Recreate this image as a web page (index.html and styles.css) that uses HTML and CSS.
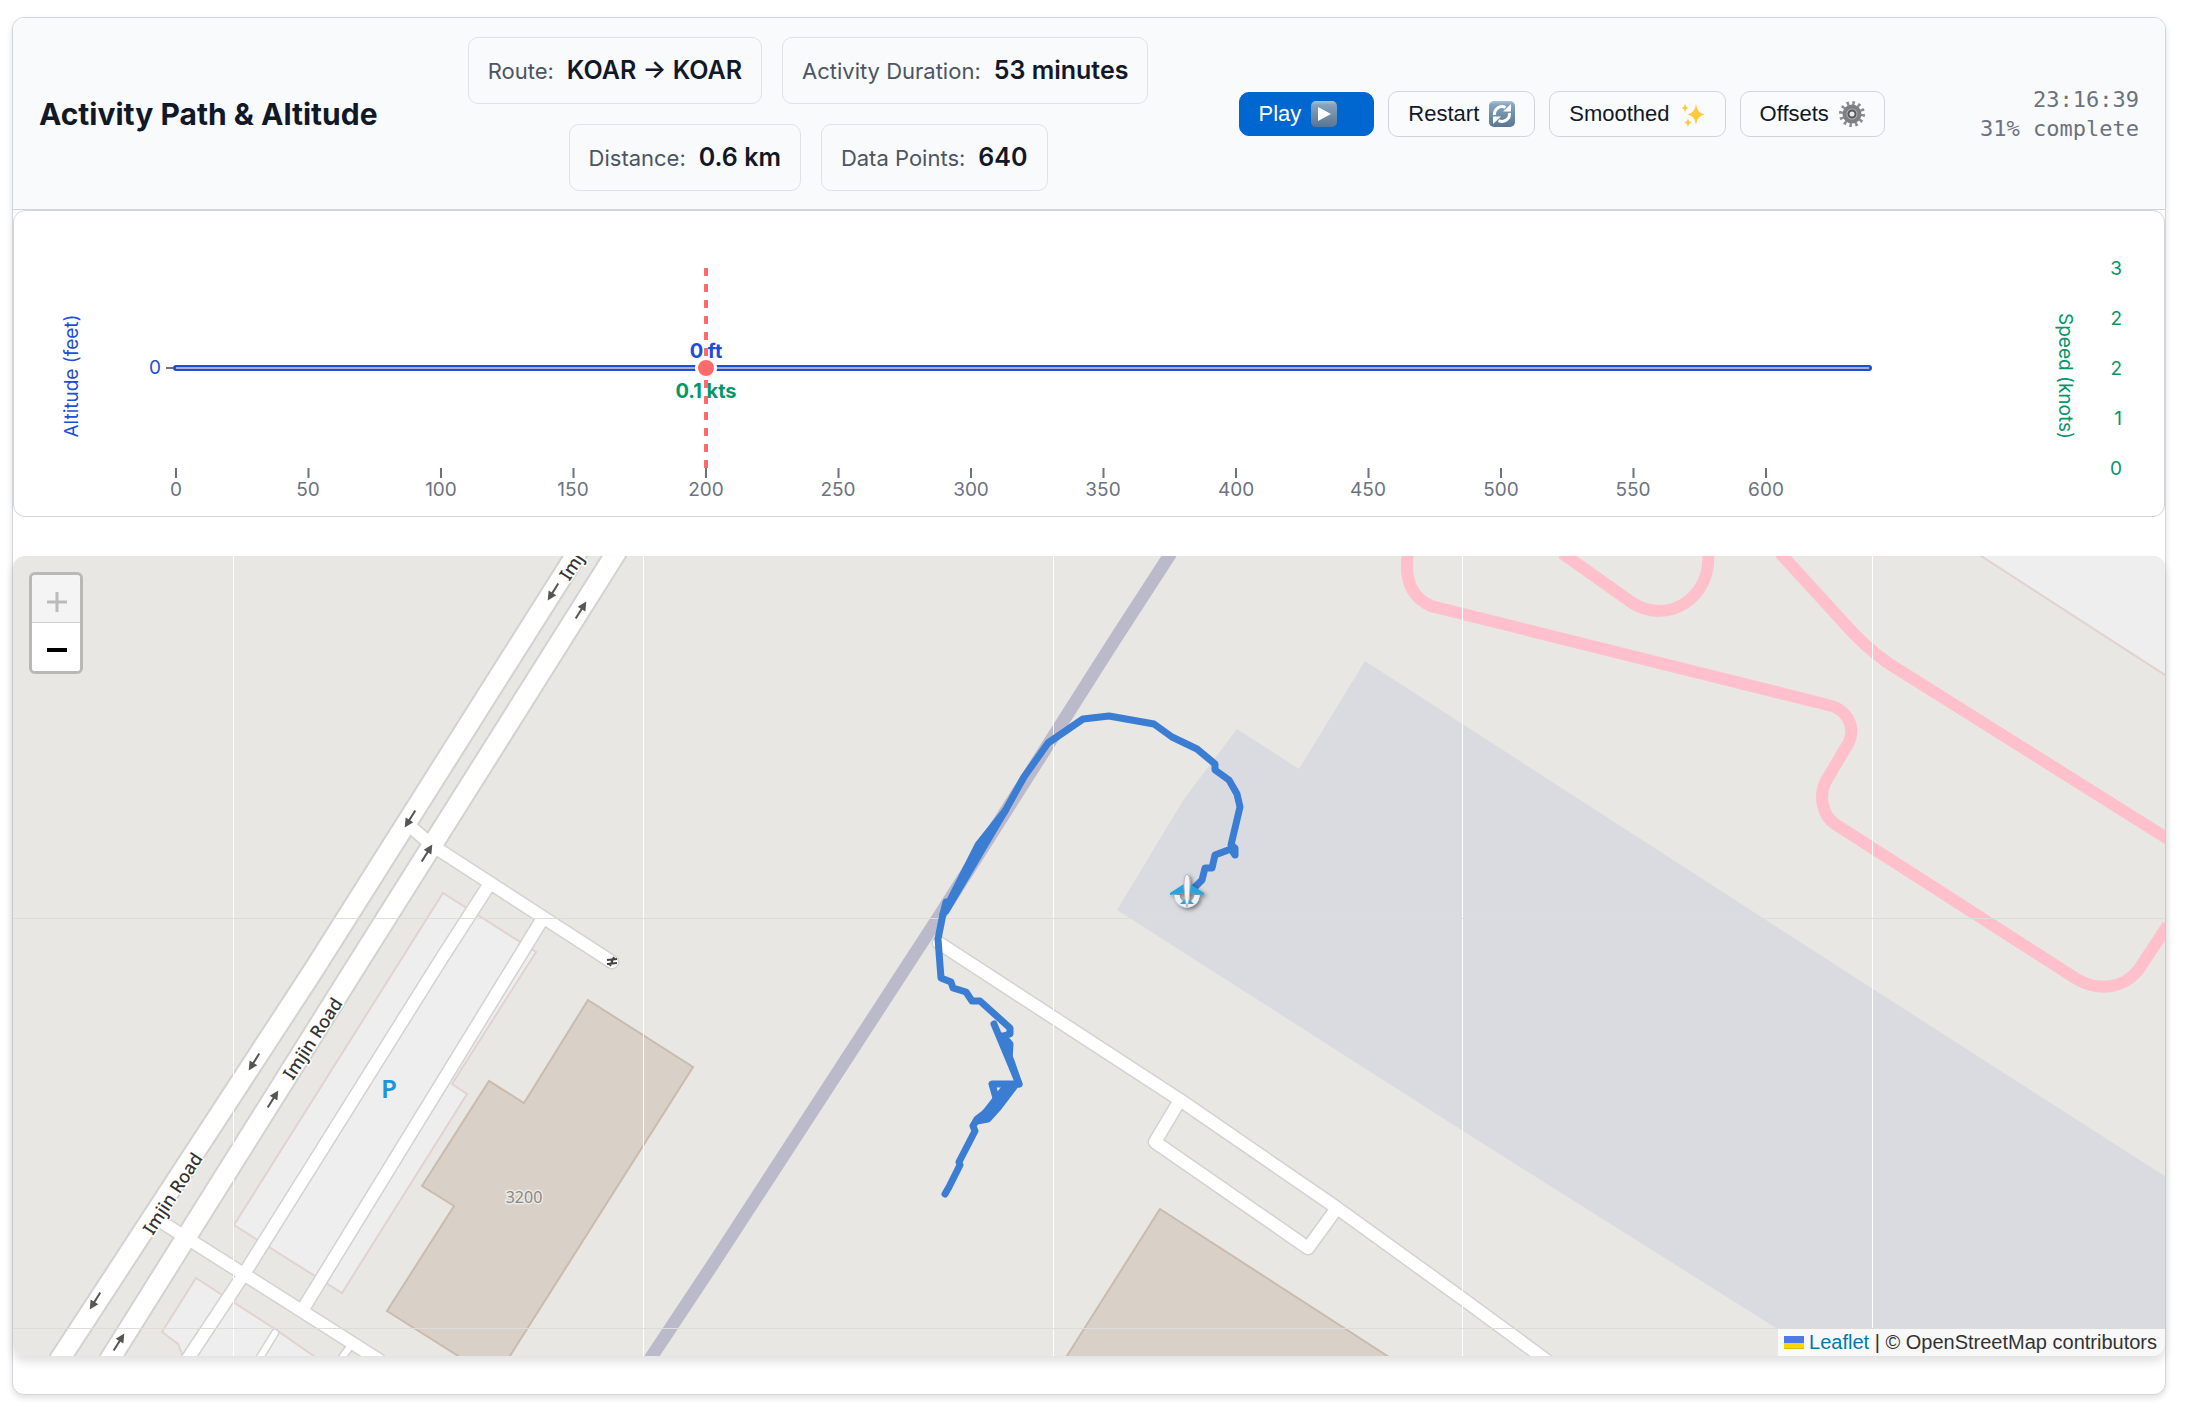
FILE: index.html
```html
<!DOCTYPE html>
<html lang="en">
<head>
<meta charset="utf-8">
<title>Activity Path &amp; Altitude</title>
<link rel="stylesheet" href="styles.css">
</head>
<body>
<main class="card">
  <header class="card-header">
    <h1 class="title">Activity Path &amp; Altitude</h1>
    <div class="stats">
      <div class="stats-row">
        <div class="stat"><span class="stat-label">Route:</span><span class="stat-value">KOAR → KOAR</span></div>
        <div class="stat"><span class="stat-label">Activity Duration:</span><span class="stat-value">53 minutes</span></div>
      </div>
      <div class="stats-row">
        <div class="stat"><span class="stat-label">Distance:</span><span class="stat-value">0.6 km</span></div>
        <div class="stat"><span class="stat-label">Data Points:</span><span class="stat-value">640</span></div>
      </div>
    </div>
    <div class="controls">
      <button type="button" class="btn btn-primary">Play
        <svg class="emoji" viewBox="0 0 26 26" aria-hidden="true">
          <defs><linearGradient id="key" x1="0" y1="0" x2="0" y2="1"><stop offset="0" stop-color="#a9c2d6"/><stop offset=".15" stop-color="#86a3bc"/><stop offset="1" stop-color="#587592"/></linearGradient></defs>
          <rect width="26" height="26" rx="5" fill="url(#key)"/><path d="M7 6v14l13-7z" fill="#fff"/>
        </svg>
      </button>
      <button type="button" class="btn">Restart
        <svg class="emoji" viewBox="0 0 26 26" aria-hidden="true">
          <rect width="26" height="26" rx="5" fill="url(#key)"/>
          <path d="M5.500 14A7.500 7.500 0 0 1 16.500 6.500M20.500 12A7.500 7.500 0 0 1 9.500 19.500" fill="none" stroke="#fff" stroke-width="3"/>
          <path d="M14 10.500h8V3zM12 15.500H4V23z" fill="#fff"/>
        </svg>
      </button>
      <button type="button" class="btn">Smoothed
        <svg class="emoji" viewBox="0 0 26 26" aria-hidden="true">
          <path d="M16 3q1 9 8.500 10.500Q17 15 16 24q-1-9-8.500-10.500Q15 12 16 3z" fill="#ffc83d"/>
          <path d="M5 2q.5 4.500 3.500 5Q5.500 7.500 5 12 4.500 7.500 1.500 7 4.500 6.500 5 2zM8 17q.6 4 4 4.500-3.400.5-4 4.500-.6-4-4-4.500 3.400-.5 4-4.500z" fill="#ffc83d"/>
        </svg>
      </button>
      <button type="button" class="btn">Offsets
        <svg class="emoji" viewBox="0 0 26 26" aria-hidden="true">
          <circle cx="13" cy="13" r="11" fill="none" stroke="#8b8d90" stroke-width="4" stroke-dasharray="2.500 3.260"/>
          <circle cx="13" cy="13" r="7.500" fill="#aeb0b4" stroke="#7d7f83" stroke-width="4"/>
          <circle cx="13" cy="13" r="3.500" fill="#e9eaec" stroke="#55575b" stroke-width="2"/>
        </svg>
      </button>
    </div>
    <div class="progress"><span>23:16:39</span><span>31% complete</span></div>
  </header>

  <section class="chart" aria-label="Altitude and speed">
    <svg class="chart-svg" viewBox="14 210 2150 305">
      <g class="ticks">
        <path d="M176 467v10M308.500 467v10M441 467v10M573.500 467v10M706 467v10M838.500 467v10M971 467v10M1103.500 467v10M1236 467v10M1368.500 467v10M1501 467v10M1633.500 467v10M1766 467v10M166 367h10"/>
      </g>
      <g class="x-labels">
        <text x="176" y="495">0</text><text x="308" y="495">50</text><text x="441" y="495">100</text><text x="573" y="495">150</text><text x="706" y="495">200</text><text x="838" y="495">250</text><text x="971" y="495">300</text><text x="1103" y="495">350</text><text x="1236" y="495">400</text><text x="1368" y="495">450</text><text x="1501" y="495">500</text><text x="1633" y="495">550</text><text x="1766" y="495">600</text>
      </g>
      <text class="alt end" x="161" y="373">0</text>
      <text class="alt mid" transform="translate(78 375) rotate(-90)">Altitude (feet)</text>
      <text class="spd mid" transform="translate(2059 375) rotate(90)">Speed (knots)</text>
      <g class="spd end">
        <text x="2122" y="274">3</text><text x="2122" y="324">2</text><text x="2122" y="374">2</text><text x="2122" y="424">1</text><text x="2122" y="474">0</text>
      </g>
      <path d="M176 367H1869" stroke="#1d4ed8" stroke-width="6" stroke-linecap="round"/>
      <path d="M176 367H1869" stroke="#a5aed0" stroke-width="2"/>
      <path d="M706 267V467" stroke="#ff6b6b" stroke-width="4" stroke-dasharray="8 8"/>
      <circle cx="706" cy="367" r="9.500" fill="#ff6b6b" stroke="#fff" stroke-width="3"/>
      <text class="alt mid strong" x="706" y="357">0 ft</text>
      <text class="spd mid strong" x="706" y="397">0.1 kts</text>
    </svg>
  </section>

  <section class="map" aria-label="Map">
    <svg class="map-svg" viewBox="13 555 2152 800" preserveAspectRatio="xMidYMid slice">
      <defs>
        <g id="arrow"><path d="M-10 0H4" stroke="#555" stroke-width="2"/><path d="M1-4.500L10 0 1 4.500z" fill="#555"/></g>
        <filter id="shadow" x="-50%" y="-50%" width="200%" height="200%"><feDropShadow dx="2" dy="2" stdDeviation="2" flood-opacity=".5"/></filter>
        <path id="service" d="M412 827L433 845 612 961M487 887L440 960 244 1273 187 1359M540 922L303 1308M160 1220L379 1359M939 942L1180 1099 1337 1207 1463 1298 1546 1359M1180 1099L1155 1141 1308 1247 1337 1207"/>
        <path id="lanes" d="M577 552L313 970 60 1358M616 552L353 970 110 1358"/>
        <path id="stubs" d="M275 1332L259 1358M349 1347L341 1358"/>
      </defs>
      <rect x="13" y="555" width="2152" height="800" fill="#e8e7e3"/>
      <g fill="#eee" stroke="#e2d2d0" stroke-width="2">
        <path d="M443 892L536 951 452 1083 467 1093 342 1292 234 1224z"/>
        <path d="M196 1277L275 1328 318 1358H184L178 1343 162 1331z"/>
        <path d="M1978 553L2168 676V550z"/>
      </g>
      <g fill="#d9d0c7" stroke="#cbbbae" stroke-width="2">
        <path d="M588 999L693 1066 508 1358H463L387 1310 454 1205 422 1185 489 1080 524 1102z"/>
        <path d="M1160 1208L1392 1358H1065z"/>
      </g>
      <path d="M1237 728L1299 768 1365 660 1873 988 2166 1176V1356H1822L1463 1130 1117 909 1184 798z" fill="#dadbe0"/>
      <path d="M1171 552L1114 640 938 917 715 1260 650 1358" fill="none" stroke="#bbbacb" stroke-width="13"/>
      <g fill="none" stroke-linejoin="round" stroke-linecap="round">
        <g stroke="#d3d2cf"><use href="#service" stroke-width="15"/><use href="#lanes" stroke-width="23"/><use href="#stubs" stroke-width="9"/></g>
        <g stroke="#fff"><use href="#service" stroke-width="12"/><use href="#lanes" stroke-width="19"/><use href="#stubs" stroke-width="6"/></g>
      </g>
      <g fill="none" stroke="#ffc0cb" stroke-width="12">
        <path d="M1408 552Q1402 592 1431 605L1828 704C1846 708 1856 724 1849 741L1826 780C1818 795 1823 815 1835 823L2075 977C2097 991 2124 988 2139 968L2168 924"/>
        <path d="M1562 552L1631 601C1666 625 1712 598 1708 552"/>
        <path d="M1780 552L1844 622Q1864 645 1888 662L2168 838"/>
      </g>
      <g class="tile-columns"><path d="M233.500 555V1355M643.500 555V1355M1053.500 555V1355M1462.500 555V1355M1872.500 555V1355"/></g>
      <g class="tile-rows"><path d="M13 917.500H2165M13 1327.500H2165"/></g>
      <use href="#arrow" transform="translate(553 591) rotate(122)"/>
      <use href="#arrow" transform="translate(410 818) rotate(122)"/>
      <use href="#arrow" transform="translate(254 1061) rotate(122)"/>
      <use href="#arrow" transform="translate(95 1300) rotate(122)"/>
      <use href="#arrow" transform="translate(581 609) rotate(-58)"/>
      <use href="#arrow" transform="translate(427 852) rotate(-58)"/>
      <use href="#arrow" transform="translate(273 1098) rotate(-58)"/>
      <use href="#arrow" transform="translate(119 1341) rotate(-58)"/>
      <path d="M607 959l10-1M607 963l10-1M614 956l-4 9" stroke="#444" stroke-width="2"/>
      <g class="road-name">
        <text transform="translate(178 1196) rotate(-57)">Imjin Road</text>
        <text transform="translate(318 1041) rotate(-57)">Imjin Road</text>
        <text transform="translate(577 569) rotate(-57)">Imj</text>
      </g>
      <text class="house-number" x="524" y="1202">3200</text>
      <text class="parking" x="389" y="1097">P</text>
      <g class="track">
        <path d="M945 1193L949 1186 960 1164 959 1161 975 1130 973 1125 977 1118 993 1106 996 1097 992 1083H1019L994 1023 1009 1059 1010 1043 1003 1035 1010 1033V1027L980 1000H972L966 991 953 987 951 981 941 977 938 938 943 913 978 844 1005 810 1024 776 1048 742 1083 718 1109 715 1154 723 1172 736 1197 748 1215 763V769L1229 779 1237 793 1240 806 1231 844 1235 847V854L1231 848 1215 854 1212 867 1205 867 1202 879 1194 887"/>
        <path d="M943 913L946 901M946 910L986 842 1005 810M948 905L984 840M1019 1083L1011 1060 1001 1035M1014 1086L998 1107 988 1118 977 1120M1010 1088L996 1098 990 1112M1004 1088L982 1116"/>
      </g>
      <g filter="url(#shadow)" transform="translate(1187 890)">
        <path d="M-10 4a10 10 0 0 0 20 0" fill="none" stroke="#e9f3f3" stroke-width="5"/>
        <path d="M-17 2L-3-7H3L17 2V4L3 2H-3L-17 4z" fill="#29a3dc"/>
        <path d="M-7 13L-2 8H2L7 13H-7z" fill="#29a3dc"/>
        <path d="M0-17C3-15 3-10 3-4L2 9 0 16-2 9-3-4C-3-10-3-15 0-17z" fill="#f4f4f4" stroke="#b4b6b8"/>
      </g>
    </svg>
    <div class="zoom-control">
      <button type="button" class="zoom-btn" disabled aria-label="Zoom in"><svg viewBox="0 0 20 20" class="zoom-icon"><path d="M0 10h20M10 0v20" stroke="currentColor" stroke-width="3"/></svg></button>
      <button type="button" class="zoom-btn" aria-label="Zoom out"><svg viewBox="0 0 20 20" class="zoom-icon"><path d="M0 10h20" stroke="currentColor" stroke-width="4"/></svg></button>
    </div>
    <div class="attribution">
      <svg class="flag" viewBox="0 0 20 13" aria-hidden="true"><path d="M0 0h20v7H0z" fill="#4c7be1"/><path d="M0 7h20v6H0z" fill="#ffd500"/><path d="M0 12h20v1H0z" fill="#e0bc00"/></svg>
      <a href="#leaflet">Leaflet</a> | © OpenStreetMap contributors
    </div>
  </section>
</main>
</body>
</html>
```
FILE: styles.css
```css
* { box-sizing: border-box; }

body {
  margin: 0;
  padding: 17px 20px 18px 12px;
  background: #fff;
  color: #111827;
  font-family: Inter, "Liberation Sans", sans-serif;
}

.card {
  border: 1px solid #d1d5db;
  border-radius: 12px;
  padding-bottom: 38px;
  background: #fff;
  box-shadow: 0 3px 6px rgba(0, 0, 0, 0.12);
}

.card-header {
  display: flex;
  align-items: center;
  justify-content: space-between;
  gap: 20px;
  padding: 19px 26px 18px;
  border-bottom: 1px solid #d1d5db;
  border-radius: 11px 11px 0 0;
  background: #f9fafb;
}

.title {
  margin: 0;
  font-size: 30px;
  font-weight: 700;
  line-height: 40px;
  white-space: nowrap;
}

.stats {
  display: flex;
  flex-direction: column;
  align-items: center;
  gap: 20px;
}

.stats-row {
  display: flex;
  justify-content: center;
  gap: 20px;
}

.stat {
  display: flex;
  align-items: baseline;
  gap: 13px;
  padding: 16px 19px;
  border: 1px solid #dfe2e7;
  border-radius: 10px;
  line-height: 32px;
  white-space: nowrap;
}

.stat-label { color: #4b5563; font-size: 22px; }
.stat-value { font-size: 25px; font-weight: 600; }

.controls { display: flex; align-items: center; gap: 14px; }

.btn {
  display: flex;
  align-items: center;
  gap: 10px;
  height: 46px;
  padding: 0 19px;
  border: 1px solid #d1d5db;
  border-radius: 10px;
  background: #fafbfc;
  color: #111827;
  font-family: "Liberation Sans", Arial, sans-serif;
  font-size: 22px;
  white-space: nowrap;
}

.btn-primary {
  height: 44px;
  padding-right: 36px;
  border-color: #0066d0;
  background: #0066d0;
  color: #fff;
}

.emoji { width: 26px; height: 26px; }

.progress {
  display: flex;
  flex-direction: column;
  align-items: flex-end;
  min-width: 164px;
  color: #6b7280;
  font-family: "DejaVu Sans Mono", monospace;
  font-size: 22px;
  line-height: 29px;
  white-space: nowrap;
}

.chart {
  border: 1px solid #d1d5db;
  border-radius: 12px;
}

.chart-svg { display: block; width: 100%; font-size: 19px; }

.ticks path { stroke: #6b7280; stroke-width: 2; }
.x-labels { fill: #6b7280; text-anchor: middle; }
.alt { fill: #1d4ed8; }
.spd { fill: #059669; }
.mid { text-anchor: middle; }
.end { text-anchor: end; }
.strong { font-size: 20px; font-weight: 700; }

.map {
  position: relative;
  margin-top: 39px;
  border-radius: 12px;
  overflow: hidden;
  box-shadow: 0 6px 10px rgba(0, 0, 0, 0.12);
}

.map-svg { display: block; width: 100%; }

.tile-columns path { stroke: #fff; stroke-width: 1; }
.tile-rows path { stroke: #dddcd9; stroke-width: 1; }

.road-name text,
.house-number,
.parking {
  font-family: "Noto Sans", sans-serif;
  text-anchor: middle;
}

.road-name text {
  fill: #333;
  stroke: #fff;
  stroke-width: 3px;
  paint-order: stroke;
  font-size: 18px;
  font-weight: 500;
}

.house-number {
  fill: #888;
  stroke: #ece8e3;
  stroke-width: 3px;
  paint-order: stroke;
  font-size: 16px;
}

.parking { fill: #1c95dd; font-size: 26px; font-weight: 600; }

.track path {
  fill: none;
  stroke: #3b7dd3;
  stroke-width: 7px;
  stroke-linecap: round;
  stroke-linejoin: round;
}

.zoom-control {
  position: absolute;
  top: 16px;
  left: 16px;
  border: 3px solid #b9b8b5;
  border-radius: 6px;
  overflow: hidden;
}

.zoom-btn {
  display: flex;
  align-items: center;
  justify-content: center;
  width: 48px;
  height: 48px;
  padding: 6px 0 0 2px;
  border: 0;
  background: #fff;
  color: #000;
}

.zoom-btn:disabled {
  border-bottom: 1px solid #ccc;
  background: #f4f4f4;
  color: #bbb;
}

.zoom-icon { width: 20px; height: 20px; }

.attribution {
  position: absolute;
  right: 0;
  bottom: 0;
  padding: 0 8px 0 6px;
  background: rgba(255, 255, 255, 0.8);
  color: #333;
  font-family: "Liberation Sans", Arial, sans-serif;
  font-size: 20px;
  line-height: 27px;
}

.attribution a { color: #0078a8; text-decoration: none; }
.flag { width: 20px; height: 13px; }
```
